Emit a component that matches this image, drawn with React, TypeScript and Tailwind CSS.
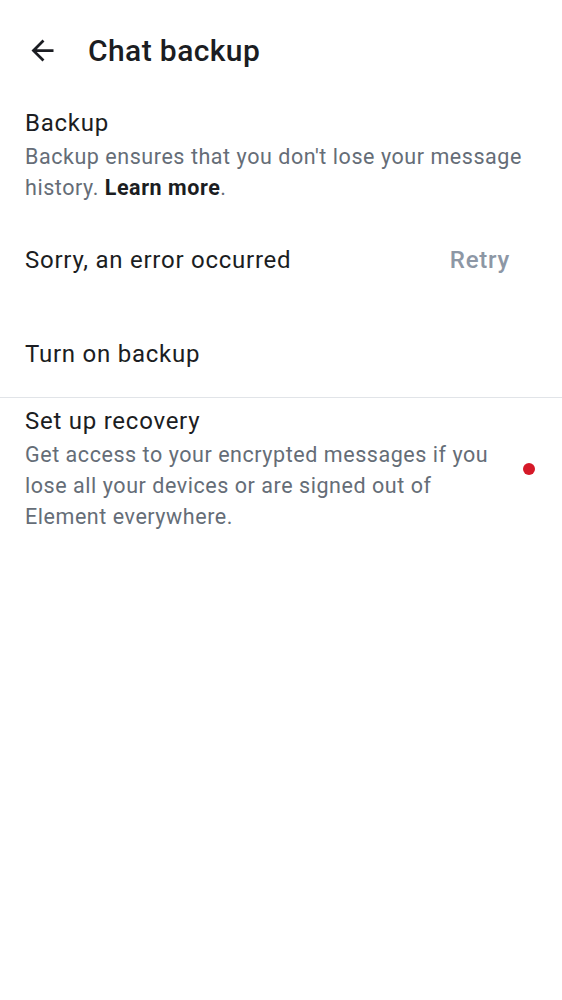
import { ReactNode } from 'react';

const font = { fontFamily: 'Roboto, "Noto Sans", sans-serif' };

function BackArrow() {
  return (
    <svg width="33" height="33" viewBox="0 0 24 24" fill="#1b1d22" aria-hidden="true">
      <path d="M20 11H7.83l5.59-5.59L12 4l-8 8 8 8 1.41-1.41L7.83 13H20v-2z" />
    </svg>
  );
}

function Title({ children }: { children: ReactNode }) {
  return <div className="text-[24px] leading-[33px] tracking-[0.75px]">{children}</div>;
}

function Subtitle({ children }: { children: ReactNode }) {
  return (
    <p className="mt-[1px] text-[21.5px] leading-[31px] tracking-[0.55px] text-[#656d77]">{children}</p>
  );
}

export default function App() {
  return (
    <div className="min-h-[1000px] w-full bg-white text-[#1b1d22]" style={font}>
      <header className="flex h-[100px] items-center">
        <button className="ml-[26px] flex h-[33px] w-[33px] items-center justify-center">
          <BackArrow />
        </button>
        <h1 className="ml-[29px] text-[30px] font-medium tracking-[0.4px]">Chat backup</h1>
      </header>

      <div className="px-[25px] pt-[7px]">
        <Title>Backup</Title>
        <Subtitle>
          Backup ensures that you don't lose your message history.{' '}
          <span className="font-bold text-[#1b1d22]">Learn more</span>.
        </Subtitle>
      </div>

      <div className="mt-[29px] flex h-[56px] items-center justify-between pl-[25px] pr-[52px]">
        <Title>Sorry, an error occurred</Title>
        <button className="text-[24px] font-medium tracking-[0.75px] text-[#8d97a5]">Retry</button>
      </div>

      <div className="mt-[38px] flex h-[56px] items-center px-[25px]">
        <Title>Turn on backup</Title>
      </div>

      <div className="mt-[15px] h-px w-full bg-[#e1e4e8]" />

      <div className="flex items-center gap-[23px] pl-[25px] pr-[27px] pt-[7px]">
        <div className="min-w-0 flex-1">
          <Title>Set up recovery</Title>
          <Subtitle>
            Get access to your encrypted messages if you lose all your devices or are signed out of Element everywhere.
          </Subtitle>
        </div>
        <span className="h-[12px] w-[12px] shrink-0 rounded-full bg-[#d51928]" />
      </div>
    </div>
  );
}
